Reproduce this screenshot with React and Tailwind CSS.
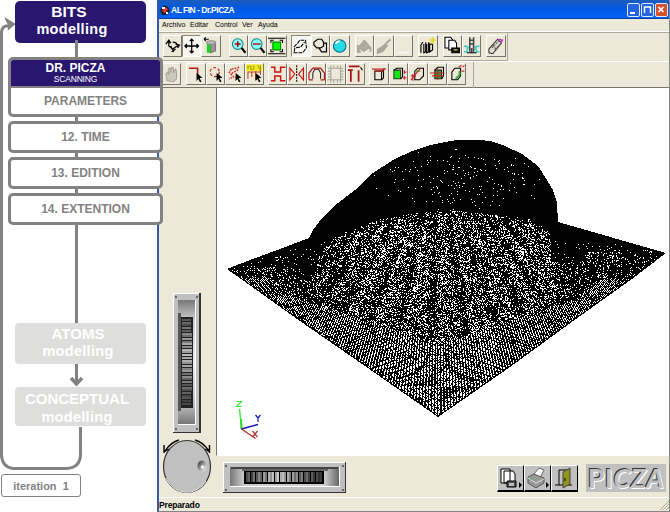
import React from 'react';

const OUTLINE = [[227,269],[250,260],[280,249],[309,238],[313,230],[322,218],[338,203],[355,190],[373,173],[393,160],[412,151],[430,145],[445,142],[457,140],[480,140],[490,141],[503,145],[522,154],[538,166],[547,180],[553,190],[557,203],[558,222],[666,253],[632,279],[580,316],[510,367],[438,417],[375,373],[300,321]];

// Upper edge of the dense dotted part of the surface
const RIM = [[227,262],[300,248],[322,243],[345,231],[380,219],[410,213],[450,210],[500,214],[530,219],[548,229],[558,239],[600,241],[666,252]];

function rimAt(x) {
  for (let i = 1; i < RIM.length; i++) {
    if (x <= RIM[i][0]) {
      const [ax, ay] = RIM[i - 1];
      const [bx, by] = RIM[i];
      return ay + ((by - ay) * (x - ax)) / (bx - ax);
    }
  }
  return 253;
}

function inside(x, y) {
  let hit = false;
  for (let i = 0, j = OUTLINE.length - 1; i < OUTLINE.length; j = i++) {
    const [xi, yi] = OUTLINE[i];
    const [xj, yj] = OUTLINE[j];
    if (yi > y !== yj > y && x < ((xj - xi) * (y - yi)) / (yj - yi) + xi) hit = !hit;
  }
  return hit;
}

function buildDots() {
  let s = 91735;
  const rnd = () => {
    s = (Math.imul(s, 1664525) + 1013904223) >>> 0;
    return s / 4294967296;
  };
  let d = '';
  for (let y = 142; y < 417; y++) {
    for (let x = 229; x < 665; x++) {
      const r = rnd();
      if (!inside(x - 1.5, y + 0.5) || !inside(x + 2.5, y + 0.5) || !inside(x + 0.5, y - 1.5)) continue;
      const rim = rimAt(x);
      let on;
      if (y < rim) {
        const cx = (x - 462) / 92;
        const cy = (y - 178) / 31;
        on = r < 0.034 * Math.max(0, 1.15 - cx * cx - cy * cy);
      } else {
        // Depth from the two front edges
        const left = 269 + ((x - 227) * 148) / 211;
        const right = 417 - ((x - 438) * 164) / 228;
        const depth = Math.min(left, right) - y;
        const flat = 343 + Math.abs(x - 438) * -0.32;
        const dx = x - 438;
        if (y > flat || depth < 20) {
          const fan = dx / (0.6 + (y - 260) / 300);
          const wave = Math.abs((fan * 0.34 + 400) % 1);
          const step = (y + Math.floor(Math.abs(dx) * 1.3)) % 5;
          const fade = y < 278 ? 0.28 : 0.78;
          const glow = Math.abs(dx) < 60 ? 0.06 : -0.02;
          on = wave < 0.5 + glow && step > 0 && r < fade;
        } else {
          const ray = dx / (y - 145);
          const streak = 0.5 + 0.32 * Math.sin(ray * 34) + 0.2 * Math.sin(ray * 71 + 1);
          let p = 0.14 + 0.27 * streak;
          if (x < 350) p *= 0.75;
          if (x < 306) p = y < 266 ? 0.08 : 0.16;
          if (x < 316 + (265 - y) * 0.3 && x > 295 && y < 280) p = 0.03;
          if (x > 555) p = y < 252 ? 0.04 : 0.15;
          if (x > 550 && x < 585 && y < 262) p = 0.03;
          p *= Math.min(1, 0.5 + (y - rim) / 20);
          on = r < p;
        }
      }
      if (on) d += `M${x} ${y}h1v1h-1z`;
    }
  }
  return d;
}

const DOTS = buildDots();

function Surface() {
  return (
    <svg className="block" width="451" height="367" viewBox="217 88 451 367" shapeRendering="crispEdges">
      <polygon points={OUTLINE.map((p) => p.join(',')).join(' ')} fill="#000" />
      <path d={DOTS} fill="#fff" />
      <g fill="none" strokeWidth="1" shapeRendering="auto">
        <path d="M239.5 409L241.5 428" stroke="#3ae83a" strokeWidth="1.4" />
        <path d="M240 419h2l.5 10h-2z" fill="#2be02b" />
        <path d="M241.500 429L258 424.500" stroke="#1818b0" strokeWidth="1.500" />
        <path d="M241.500 429L255.500 438.500" stroke="#b83030" strokeWidth="1.500" />
        <path d="M236.500 401.500h5l-5 5h5" stroke="#3ae83a" strokeWidth="1.200" />
        <path d="M255.500 415l2.500 3 2.500-3M258 418v4" stroke="#1818b0" strokeWidth="1.200" />
        <path d="M252.500 431l5 6M257.500 431l-5 6" stroke="#b83030" strokeWidth="1.200" />
      </g>
    </svg>
  );
}

function Tool({ on, children }) {
  return (
    <div className={`w-[19.4px] h-[22px] border shrink-0 ${on ? 'border-t-[#8a877c] border-l-[#8a877c] border-r-white border-b-white bg-[#f7f6f0]' : 'border-t-white border-l-white border-r-[#77756c] border-b-[#77756c] bg-[#ece9d8]'}`}>
      <svg className="block w-full h-full" viewBox="0 0 18 20" fill="none" stroke="#000" strokeWidth="1.1">{children}</svg>
    </div>
  );
}

const Cursor = () => <path d="M10 9l6 5-3 .3 2 3.500-1.500.8-1.700-3.400-2 2z" fill="#000" stroke="none" />;

function ToolbarTop() {
  return (
    <div className="flex w-[349px] h-[28px] pt-[2px] pl-[3.500px] border-r border-b border-[#aca899]">
      <Tool><path d="M5 4v6l4 3 6-4M2 8l3-4 2 3M9 6c4 0 5 2 5 5M7 10l3 6M8 16l4-3M12 8l4 1-2 3" strokeWidth="1.300" /></Tool>
      <Tool on><path d="M9 3v14M2 10h14M7 5l2-2 2 2M7 15l2 2 2-2M4 8l-2 2 2 2M14 8l2 2-2 2" strokeWidth="1.300" /></Tool>
      <Tool><path d="M5 8v9h4V8z" fill="#19d819" stroke="none" /><path d="M9 7v10l5-2V7z" fill="#9a9a92" stroke="#777" /><ellipse cx="9.500" cy="6.500" rx="4.500" ry="2" fill="#bbb" stroke="#888" /><path d="M2 3h5M2 3l2-2M2 3l2 2" /></Tool>
      <div className="w-[8px]" />
      <Tool><circle cx="8" cy="8" r="5.500" fill="#8ff" stroke="#188" /><path d="M5 8h6M8 5v6" stroke="#a00" strokeWidth="1.500" /><path d="M12 12l4 5" strokeWidth="2.200" /></Tool>
      <Tool><circle cx="8" cy="8" r="5.500" fill="#8ff" stroke="#188" /><path d="M4 8h8" stroke="#a33" strokeWidth="1.700" /><path d="M12 12l4 5" strokeWidth="2.200" /></Tool>
      <Tool><path d="M5 6h8v8H5z" fill="#0f0" stroke="#080" /><path d="M0 2h18M0 18h18M3 7V4h3M12 4h3v3M3 13v3h3M12 16h3v-3" /></Tool>
      <div className="w-[4.500px]" />
      <Tool on><path d="M2 11l4-4 2-3h6l1 8-4 5H2l1-5 6-1 4-5" strokeDasharray="4 1" /></Tool>
      <Tool><path d="M6 3h4l2 3v4l-3 2H5L2 9V6zM12 7h3v9h-5l-3-4" strokeWidth="1.200" /></Tool>
      <Tool><circle cx="9" cy="10" r="6.500" fill="#24dce8" stroke="#168" /><path d="M5 8a4 3 0 014-3" stroke="#fff" strokeWidth="2" /></Tool>
      <div className="w-[5.500px]" />
      <Tool><path d="M3 11l6-6 5 6-6 4zM2 9v7h3M8 4v7M15 11v5" fill="#b5b2a4" stroke="#aaa698" strokeWidth="2" /></Tool>
      <Tool><path d="M16 3l-7 7M9 10l-6 4 0 3 5-2 4-5z" fill="#aaa698" stroke="#aaa698" strokeWidth="2" /></Tool>
      <Tool><path d="M3 17h12" stroke="#fff" /></Tool>
      <div className="w-[5px]" />
      <Tool><path d="M2 9v8M2 9l2-3M5 8v9l2-1V6M8 8v9l2-1V6M11 8v8l3-2V8z" strokeWidth="1.200" /><path d="M11 4h6M14 1v7" stroke="#e2d62a" strokeWidth="2" /></Tool>
      <div className="w-[5px]" />
      <Tool><path d="M1 1h6l2 3v8H1z" fill="#fff" /><path d="M5 4h6l2 3v7H5z" fill="#fff" /><path d="M8 12h8v5H8z" fill="#111" /><path d="M10 14h4" stroke="#ee4" /></Tool>
      <Tool><path d="M7 1v15M11 1v15M7 4h4M7 8h4M9 12v5" stroke="#444" strokeWidth="1.600" /><path d="M1 10l4 1-1 5H1M17 10l-4 1 1 5h3" stroke="#35c9cf" strokeWidth="1.700" /><path d="M4 17h10" /></Tool>
      <div className="w-[5px]" />
      <Tool><path d="M2 13l9-10 4 4-9 11-4-1z" fill="#dedbd2" stroke="#333" /><path d="M5 12l7-7M8 14l6-6M6 9l4 5" stroke="#555" strokeDasharray="2 1" /><path d="M12 3l4 1-2 3" stroke="#c3c" strokeWidth="1.600" /></Tool>
    </div>
  );
}

function ToolbarBottom() {
  return (
    <div className="flex w-[315px] h-[26px] pt-[1px] pl-[3px] border-r border-[#aca899]">
      <Tool><path d="M4 17L3 10l2-2 1 3V4h2v5l1-6 2 1v5l2-4 1 2v8l-3 3z" fill="#cbc8bc" stroke="#aaa698" /></Tool>
      <div className="w-[5px]" />
      <Tool><path d="M2 4h9v9" stroke="#b01c1c" strokeWidth="1.600" /><Cursor /></Tool>
      <Tool><circle cx="8" cy="8" r="4.700" stroke="#cc2c2c" strokeDasharray="3 2" strokeWidth="1.300" /><Cursor /></Tool>
      <Tool><path d="M6 5l4-1 2 2-4 2-3 2 3 3-5 2M3 9l3-5M12 4l2-2" stroke="#cc2c2c" strokeDasharray="2 1" strokeWidth="1.400" /><Cursor /></Tool>
      <Tool><path d="M0 0h17v7H0z" fill="#f3eb25" stroke="none" /><path d="M2 5V2h3v3h3V1M12 1l3 5M15 1v6" stroke="#a89c18" /><path d="M2 15V8h4v5M10 7v9M15 7v4M6 8h9" stroke="#b42" /><Cursor /></Tool>
      <div className="w-[4px]" />
      <Tool><path d="M2 3h4v5h6V3h5M2 17h4v-5h6v5h5" stroke="#c11" strokeWidth="1.500" /></Tool>
      <Tool><path d="M2 4v12l5-6zM16 4v12l-5-6z" stroke="#c11" strokeWidth="1.200" /><path d="M9 1v18" strokeDasharray="2 1" /></Tool>
      <Tool><path d="M5 15V9l2-4h4l2 4v6" stroke="#222" /><path d="M1 16V9l4-5h8l4 5v7M1 16h4M13 16h4" stroke="#b11" strokeWidth="1.200" /></Tool>
      <Tool><path d="M4 1v18M14 1v18M1 4h16M1 16h16M1 7h3M1 10h3M1 13h3M14 7h3M14 10h3M14 13h3M7 1v3M11 1v3M7 16v3M11 16v3" stroke="#aaa698" /></Tool>
      <Tool><path d="M2 2h11M4 6v12M12 6v12M1 6h5" stroke="#a41616" strokeWidth="1.800" /><path d="M14 3l2 3" /></Tool>
      <div className="w-[4.500px]" />
      <Tool><path d="M5 7h7v9H5zM12 7l2-2v9l-2 2" /><path d="M2 5h14M5 7h8l3-3" stroke="#c02424" strokeWidth="1.300" /></Tool>
      <Tool><path d="M4 6h7v9H4z" fill="#10e810" stroke="#333" /><path d="M4 6l3-2h6v9l-2 2" /><path d="M14 8h3M15 6v4M13 14h4M15 12v4" stroke="#d33" strokeWidth="1.200" /></Tool>
      <Tool><path d="M6 7l3-3h6v8l-4 4H6z" /><path d="M6 7h6" stroke="#3a3" /><path d="M2 12h5M4 10v7M2 16l10-12" stroke="#c22" strokeWidth="1.200" /></Tool>
      <Tool><path d="M6 6h7v9H6z" fill="#2a4" stroke="#222" /><path d="M6 6l3-3h6v9l-2 3" /><path d="M1 9h15M3 12h12M9 4v12" stroke="#c22" strokeWidth="1.200" /></Tool>
      <Tool><path d="M4 8l3-4h6v8l-3 4H4z" /><path d="M8 15l4-4V7" stroke="#3a3" strokeWidth="2" /><path d="M11 3l3-2M15 3l2-2M14 7h3" stroke="#c22" /></Tool>
    </div>
  );
}

const RIBS = [60,90,40,110,70,140,95,170,120,200,150,215,175,225,190,210,160,190,130,170,105,150,80,125,60,100,45,80,35,60,25,40];

function WheelVertical() {
  return (
    <svg className="block" width="28" height="140" viewBox="0 0 28 140" shapeRendering="crispEdges">
      <defs>
        <linearGradient id="wellV" x1="0" x2="0" y1="0" y2="1">
          <stop offset="0" stopColor="#777" /><stop offset=".15" stopColor="#c8c8c8" /><stop offset=".5" stopColor="#eee" /><stop offset=".85" stopColor="#bbb" /><stop offset="1" stopColor="#777" />
        </linearGradient>
      </defs>
      <rect width="28" height="140" fill="#333" /><rect width="26" height="139" fill="#fff" /><rect x="1" y="1" width="25" height="138" fill="#c0c0c0" />
      <rect x="5" y="7" width="18" height="125" fill="#fff" /><rect x="5" y="7" width="17" height="124" fill="url(#wellV)" />
      <rect x="5" y="20" width="3" height="98" fill="#555" /><rect x="8" y="24" width="12" height="91" fill="#222" />
      {RIBS.map((v, i) => <rect key={i} x="9" y={26 + i * 2.700} width={i < 5 || i > 26 ? 9 : 10} height="2" fill={`rgb(${50 + v * 0.6},${50 + v * 0.6},${50 + v * 0.6})`} />)}
      <path d="M2 3h2v2H2zM23 3h2v2h-2zM2 135h2v2H2zM23 135h2v2h-2z" fill="#666" />
    </svg>
  );
}

function WheelHorizontal() {
  return (
    <svg className="block" width="123" height="31" viewBox="0 0 123 31" shapeRendering="crispEdges">
      <defs>
        <linearGradient id="wellH">
          <stop offset="0" stopColor="#777" /><stop offset=".13" stopColor="#ccc" /><stop offset=".87" stopColor="#ccc" /><stop offset="1" stopColor="#666" />
        </linearGradient>
      </defs>
      <rect width="123" height="31" fill="#333" /><rect width="122" height="30" fill="#fff" /><rect x="1" y="1" width="121" height="29" fill="#c0c0c0" />
      <rect x="7" y="5" width="110" height="20" fill="#fff" /><rect x="7" y="5" width="109" height="19" fill="url(#wellH)" />
      <rect x="8" y="5" width="107" height="2" fill="#444" /><rect x="19" y="7" width="86" height="2" fill="#666" /><rect x="21" y="9" width="80" height="13" fill="#000" />
      {RIBS.map((v, i) => <rect key={i} x={23 + i * 2.400} y="10" width="2" height="10" fill={`rgb(${30 + v * 0.75},${30 + v * 0.75},${30 + v * 0.75})`} />)}
      <path d="M2 3h2v2H2zM119 3h2v2h-2zM2 27h2v2H2zM119 27h2v2h-2z" fill="#666" />
    </svg>
  );
}

function Dial() {
  return (
    <svg className="block" width="52" height="58" viewBox="161 437 52 58">
      <defs><linearGradient id="knob" x1="1" y1="1" x2="0" y2="0"><stop offset="0" stopColor="#fff" /><stop offset=".5" stopColor="#999" /><stop offset="1" stopColor="#222" /></linearGradient></defs>
      <path d="M165 451q6-9 14-11M209 451q-6-9-14-11M164 445v8M209.500 445v8M164 452l5-3M210 452l-5-3" fill="none" stroke="#000" strokeWidth="1.400" />
      <ellipse cx="187" cy="466.500" rx="23.500" ry="26" fill="#c0c0c0" stroke="#333" strokeWidth="1.200" />
      <path d="M166 478a23 25 0 0040 3" stroke="#eee" fill="none" />
      <ellipse cx="202" cy="466" rx="4.500" ry="5.500" fill="url(#knob)" /><circle cx="202.500" cy="467" r="1.800" fill="#fff" />
    </svg>
  );
}

function BigButton({ children }) {
  return (
    <div className="w-[27px] h-[27px] bg-[#c0c0c0] border-t border-l border-t-white border-l-white border-r border-r-black border-b-2 border-b-black">
      <svg className="block" width="25" height="24" viewBox="0 0 25 24" fill="none" stroke="#000">{children}</svg>
    </div>
  );
}

function WindowButton({ close, children }) {
  return (
    <div className={`w-[13px] h-[14px] rounded-[2px] border border-[#dfe9ff] shrink-0 ${close ? 'bg-[#d9512c]' : 'bg-[#2663e0]'}`}>
      <svg className="block" width="11" height="12" viewBox="0 0 11 12" stroke="#fff" fill="none">{children}</svg>
    </div>
  );
}

function Step({ children }) {
  return <div className="ml-[8px] mt-[4px] h-[32px] w-[155px] rounded-[5px] border-[3px] border-[#828282] bg-white text-[#828282] font-bold text-[12px] leading-[27px] text-center">{children}</div>;
}

function Sidebar() {
  return (
    <aside className="relative z-10 flex flex-col w-[157px] h-[512px] bg-white shrink-0">
      <svg className="absolute left-0 top-0" width="157" height="512" fill="none" stroke="#828282" strokeWidth="3">
        <path d="M1.500 457V32Q2 27 6 26H11" />
        <path d="M5 18l10 6-7 6 1-4z" strokeWidth="1" fill="#828282" />
        <path d="M76.500 40v285M76.500 364v20" />
        <path d="M71 378l5.500 6 5.500-6" strokeWidth="3.500" />
        <path d="M1.500 455Q2 467 13 468.500H66Q80 468 80.500 455V427" />
      </svg>
      <div className="relative flex flex-col w-full h-full">
        <div className="ml-[15px] mt-[1px] h-[42px] w-[131px] rounded-[5px] bg-[#29166f] text-white font-bold pr-[23px] text-center">
          <div className="text-[15.500px] leading-[17px] pt-[2px]">BITS</div>
          <div className="text-[14.500px] leading-[18px] tracking-[0.3px] pl-[6px]">modelling</div>
        </div>
        <div className="h-0 w-[3px] ml-[75px]"><div className="-mt-[3px] h-[17px] w-[3px] bg-[#828282]" /></div>
        <div className="ml-[8px] mt-[14px] w-[155px] h-[60px] rounded-[5px] border-[3px] border-[#828282] bg-white overflow-hidden text-center font-bold">
          <div className="h-[28px] bg-[#29166f] border-b-2 border-[#828282] text-white pr-[20px]">
            <div className="text-[12px] leading-[13px] pt-[2px]">DR. PICZA</div>
            <div className="text-[8.500px] font-normal leading-[8px] tracking-[-0.2px]">SCANNING</div>
          </div>
          <div className="text-[12px] leading-[27px] text-[#828282]">PARAMETERS</div>
        </div>
        <Step>12. TIME</Step>
        <Step>13. EDITION</Step>
        <Step>14. EXTENTION</Step>
        <div className="ml-[15px] mt-[98px] h-[41px] w-[131px] rounded-[4px] bg-[#dededd] text-white font-bold text-center pr-[5px]">
          <div className="text-[15px] leading-[18px] pt-[2px]">ATOMS</div>
          <div className="text-[14.500px] leading-[17px] tracking-[0.3px]">modelling</div>
        </div>
        <div className="ml-[15px] mt-[23px] h-[39px] w-[131px] rounded-[4px] bg-[#dededd] text-white font-bold text-center pr-[7px]">
          <div className="text-[15px] leading-[18px] pt-[3px]">CONCEPTUAL</div>
          <div className="text-[14.500px] leading-[18px] tracking-[0.3px]">modelling</div>
        </div>
        <div className="ml-[1px] mt-[48px] h-[23px] w-[80px] rounded-[3px] border border-[#828282] bg-white text-[#828282] font-bold text-[11px] leading-[22px] text-center whitespace-pre">iteration  1</div>
      </div>
    </aside>
  );
}

export default function App() {
  return (
    <div className="flex w-[670px] h-[512px] overflow-hidden bg-white font-['Liberation_Sans',Arial,sans-serif]">
      <Sidebar />
      <main className="flex flex-col w-[513px] h-[512px] bg-[#ece9d8] border-l-2 border-l-[#3459a8] border-r border-r-[#858585] border-b border-b-[#858585]">
        <header className="flex items-center h-[19px] pl-[1px] pr-[1px] pt-[1px] gap-[1px] bg-linear-to-b from-[#1c5cbb] via-[#0058e8] to-[#0362f5] border-b border-[#0b3ea8] shrink-0">
          <svg width="10" height="11" viewBox="0 0 10 11"><path d="M0 6l4-5 4 2 2 4-4 4H2z" fill="#222" /><path d="M2 7l3-4 3 2-3 4z" fill="#e33" /><path d="M2 3h3v2H2zM6 8h2v2H6z" fill="#fff" /></svg>
          <div className="flex-1 text-white font-bold text-[8.500px] leading-[12px] tracking-[-0.5px] whitespace-pre">AL FIN - Dr.PICZA</div>
          <WindowButton><path d="M2 9h5" strokeWidth="2" /></WindowButton>
          <WindowButton><path d="M2.500 9V3h6v6" strokeWidth="1.500" /></WindowButton>
          <WindowButton close><path d="M2.500 3l5 5M7.500 3l-5 5" strokeWidth="1.700" /></WindowButton>
        </header>
        <nav className="flex h-[13px] pl-[3px] text-[7px] leading-[12px] text-black border-b border-white shrink-0">
          <span className="w-[28px]">Archivo</span><span className="w-[25px]">Editar</span><span className="w-[27px]">Control</span><span className="w-[16px]">Ver</span><span>Ayuda</span>
        </nav>
        <div className="h-[56px] border-t border-[#aca899] border-b border-b-[#77756c] shrink-0">
          <div className="h-[28px]"><ToolbarTop /></div>
          <div className="border-t border-white"><ToolbarBottom /></div>
        </div>
        <div className="flex h-[368px] shrink-0">
          <div className="flex flex-col w-[57px] pt-[205px] shrink-0">
            <div className="pl-[14px]"><WheelVertical /></div>
            <div className="pl-[2px] pt-[4px] h-[23px]"><Dial /></div>
          </div>
          <div className="border-l border-[#77756c] border-b border-b-white bg-white w-[453px] overflow-hidden"><Surface /></div>
        </div>
        <div className="flex h-[42px] pl-[64px] pt-[6px] border-b border-white shrink-0">
          <WheelHorizontal />
          <div className="flex ml-[151px] mt-[3px]">
            <BigButton><path d="M3 3h9v14H3zM6 5h9l2 3v9H6z" fill="#fff" /><path d="M9 15h9v6H9z" fill="#555" /><path d="M11 17h5v3h-5z" fill="#bbb" stroke="none" /><path d="M21 16v6l3-3z" fill="#000" stroke="none" /></BigButton>
            <BigButton><path d="M9 8l5-6 5 2-4 8z" fill="#fff" stroke="#666" /><path d="M3 11l6-3 10 4v5l-8 5-8-5z" fill="#999" stroke="#444" strokeWidth=".8" /><path d="M3 12l8 5 8-4" stroke="#ddd" /><path d="M5 13h3" stroke="#4b6" /><path d="M21 16v6l3-3z" fill="#000" stroke="none" /></BigButton>
            <BigButton><path d="M3 19h17M7 19V4h10v15" /><path d="M11 6l7-4v16l-7 4z" fill="#93941c" stroke="#444" /><path d="M13 12v3" /></BigButton>
          </div>
          <div className="ml-[8px] mt-[2px] w-[80px] h-[28px] bg-[#c0c0c0] shrink-0 flex items-center justify-center font-['Lato',sans-serif] font-bold text-[27px] leading-[28px] tracking-[0.5px] text-[#c0c0c0] [text-shadow:-1px_-1px_0_#333,1px_1px_0_#fff]">
            <span>PI</span><span className="italic">CZA</span>
          </div>
        </div>
        <footer className="flex justify-between h-[13px] text-[8.500px] font-bold leading-[14px] text-black tracking-[-0.15px]">
          Preparado
          <svg width="10" height="12"><path d="M1 12l9-9M4 12l6-6M7 12l3-3" stroke="#aca899" /></svg>
        </footer>
      </main>
    </div>
  );
}
